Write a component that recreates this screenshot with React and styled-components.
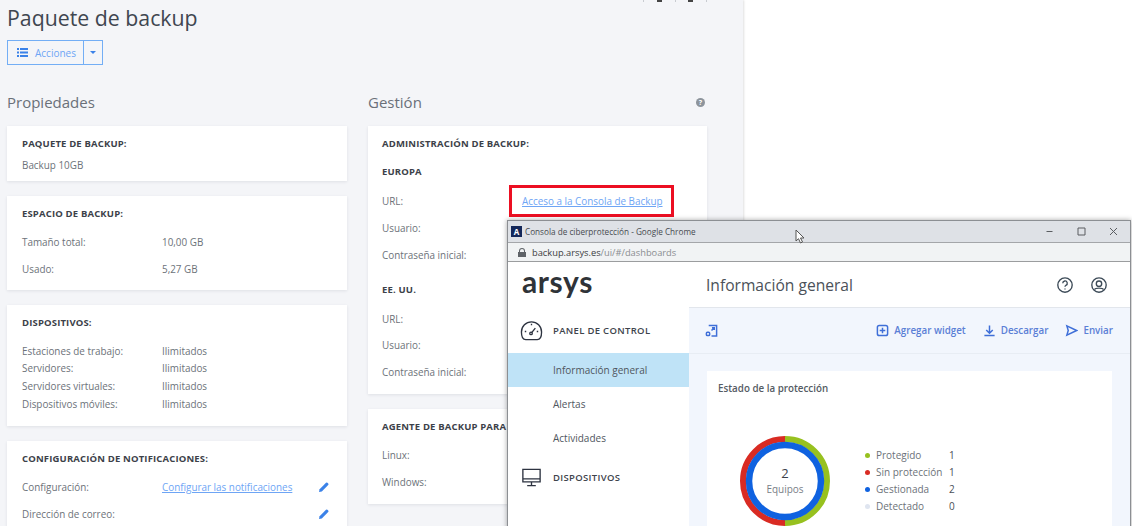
import React from 'react';
import styled, { createGlobalStyle } from 'styled-components';

const GlobalStyle = createGlobalStyle`
  html, body { margin: 0; padding: 0; background: #fff; }
  body { font-family: "Open Sans", "Liberation Sans", sans-serif; color: #4a4f57; }
`;

const Screen = styled.div`
  position: relative;
  width: 1132px;
  height: 526px;
  overflow: hidden;
  background: #fff;
`;

const Panel = styled.main`
  box-sizing: border-box;
  width: 743px;
  height: 526px;
  padding: 4px 36px 0 7px;
  overflow: hidden;
  background: #f4f5f8;
  box-shadow: 1px 0 2px rgba(0, 0, 0, 0.12);
`;

const TopMarks = styled.div`
  position: absolute;
  top: 0;
  left: 643px;
  display: flex;
  width: 64px;
  height: 2px;
  justify-content: space-between;
  span { width: 1px; background: #c9ccd1; }
  span:nth-child(2), span:nth-child(4) { width: 5px; background: #444; }
`;

const Title = styled.h1`
  margin: 0;
  font-size: 21.3px;
  line-height: 27px;
  font-weight: 400;
  color: #3f4650;
`;

const SplitButton = styled.div`
  display: inline-flex;
  height: 25px;
  margin-top: 9px;
  border: 1px solid #73aef5;
  box-sizing: border-box;
  color: #6ea5f5;
  font-size: 10px;
  align-items: stretch;
`;

const ButtonMain = styled.span`
  display: flex;
  width: 76px;
  box-sizing: border-box;
  padding-left: 9px;
  gap: 7px;
  align-items: center;
  border-right: 1px solid #73aef5;
`;

const ButtonCaret = styled.span`
  display: flex;
  flex: 1;
  width: 18px;
  align-items: center;
  justify-content: center;
  &::after {
    content: '';
    border-left: 3px solid transparent;
    border-right: 3px solid transparent;
    border-top: 3px solid #3b82e8;
  }
`;

const Columns = styled.div`
  display: grid;
  grid-template-columns: 340px 339px;
  gap: 21px;
  margin-top: 26px;
  align-items: start;
`;

const Column = styled.section`
  display: flex;
  flex-direction: column;
  gap: 15px;
`;

const SectionHead = styled.div`
  display: flex;
  height: 22px;
  margin-bottom: -2px;
  align-items: center;
  justify-content: space-between;
  font-size: 15px;
  color: #6a7079;
`;

const HelpDot = styled.span`
  display: flex;
  width: 9px;
  height: 9px;
  margin-right: 2px;
  border-radius: 50%;
  background: #8d949c;
  color: #fff;
  font-size: 7px;
  font-weight: 700;
  align-items: center;
  justify-content: center;
`;

const Card = styled.div`
  box-sizing: border-box;
  height: ${p => p.$height}px;
  padding: 10px 15px 0 ${p => p.$inset || 15}px;
  background: #fff;
  box-shadow: 0 1px 3px rgba(40, 50, 70, 0.1);
  font-size: 9.9px;
  overflow: hidden;
`;

const CardTitle = styled.div`
  height: ${p => p.$height || 16}px;
  margin-top: ${p => p.$gap || 0}px;
  line-height: 16px;
  font-size: 9.5px;
  font-weight: 700;
  letter-spacing: 0.16px;
  color: #3c4149;
`;

const Row = styled.div`
  display: grid;
  grid-template-columns: 140px 1fr auto;
  height: ${p => p.$height || 27}px;
  align-items: center;
  color: #6c7279;
`;

const Link = styled.a`
  position: relative;
  justify-self: start;
  color: #6ea5f5;
  text-decoration: underline;
  &[data-boxed]::after {
    content: '';
    position: absolute;
    top: -9px;
    bottom: -9px;
    left: -13px;
    right: -11px;
    border: 3px solid #ec0f22;
  }
`;

const Pencil = styled.svg`
  width: 10px;
  height: 10px;
  fill: #3b82e8;
  margin-right: 3px;
`;

/* chrome window sitting on top of the page */
const Popup = styled.div`
  position: absolute;
  left: 507px;
  top: 220px;
  width: 624px;
  height: 320px;
  display: flex;
  flex-direction: column;
  background: #fff;
  border: 1px solid #8c8f93;
  box-sizing: border-box;
  box-shadow: 0 0 5px rgba(0, 0, 0, 0.35);
`;

const TitleBar = styled.div`
  display: flex;
  flex: 0 0 21px;
  padding: 0 4px 0 3px;
  align-items: center;
  gap: 3px;
  background: #dee1e6;
  font-size: 8.2px;
  color: #474b50;
  border-bottom: 1px solid #a4a6a9;
`;

const Favicon = styled.span`
  display: flex;
  width: 11px;
  height: 11px;
  background: #14285a;
  color: #fff;
  font-size: 8px;
  font-weight: 700;
  align-items: center;
  justify-content: center;
`;

const WindowButtons = styled.div`
  display: flex;
  margin-left: auto;
  gap: 19px;
  padding-right: 6px;
  color: #5a5d61;
  svg { display: block; width: 13px; height: 13px; fill: none; stroke: currentColor; stroke-width: 1; }
`;

const AddressBar = styled.div`
  display: flex;
  flex: 0 0 18px;
  padding-left: 10px;
  gap: 6px;
  align-items: center;
  background: #f1f3f4;
  border-bottom: 1px solid #9b9d9f;
  font-size: 9.3px;
  color: #8a8d91;
  b { font-weight: 400; color: #3c4043; }
  svg { width: 8px; height: 9px; fill: #5f6368; }
`;

const PopupBody = styled.div`
  display: grid;
  flex: 1;
  grid-template-columns: 181px 1fr;
  min-height: 0;
`;

const Sidebar = styled.nav`
  display: flex;
  flex-direction: column;
`;

const Logo = styled.div`
  height: 46px;
  padding-left: 14px;
  font-family: "Lato", sans-serif;
  font-size: 30px;
  font-weight: 700;
  line-height: 38px;
  letter-spacing: 0.6px;
  color: #2f3338;
`;

const NavGroup = styled.div`
  display: flex;
  height: ${p => p.$height}px;
  padding-left: 12px;
  gap: 10px;
  align-items: center;
  font-size: 9.5px;
  font-weight: 600;
  letter-spacing: 0.32px;
  color: #3e444c;
  svg { width: 23px; height: 23px; fill: none; stroke: #2d3340; stroke-width: 1.4; flex: none; }
`;

const NavItem = styled.div`
  display: flex;
  height: ${p => p.$height || 34}px;
  padding-left: 45px;
  align-items: center;
  font-size: 10px;
  color: #4f565e;
  background: ${p => (p.$active ? '#bfe3f7' : 'transparent')};
`;

const Content = styled.div`
  display: flex;
  flex-direction: column;
  background: #f2f6fd;
`;

const PageHead = styled.header`
  display: flex;
  flex: 0 0 45px;
  padding: 0 22px 0 17px;
  gap: 16px;
  align-items: center;
  background: #fff;
  border-bottom: 1px solid #e2e6ec;
  font-size: 15.6px;
  color: #4b5159;
  span { margin-right: auto; }
  svg { width: 18px; height: 18px; fill: none; stroke: #3c4a57; stroke-width: 1.5; }
`;

const Toolbar = styled.div`
  display: flex;
  flex: 0 0 45px;
  padding: 0 17px 0 16px;
  gap: 17px;
  align-items: center;
  border-bottom: 1px solid #e8edf4;
  font-size: 9.8px;
  font-weight: 600;
  color: #5b7fd6;
`;

const ToolAction = styled.span`
  display: flex;
  gap: 5px;
  align-items: center;
  svg { width: 13px; height: 13px; fill: none; stroke: #3f6fd8; stroke-width: 1.6; }
  &:first-child { margin-right: auto; }
`;

const Widget = styled.div`
  flex: 1;
  margin: 17px 18px 0 18px;
  padding: 10px 11px;
  background: #fff;
`;

const WidgetTitle = styled.div`
  font-size: 9.8px;
  font-weight: 600;
  line-height: 16px;
  color: #555b63;
`;

const Chart = styled.div`
  display: flex;
  margin: 39px 0 0 22px;
  gap: 35px;
  align-items: flex-start;
`;

const Donut = styled.div`
  position: relative;
  width: 90px;
  height: 90px;
  svg { display: block; }
`;

const DonutLabel = styled.div`
  position: absolute;
  inset: 0;
  display: flex;
  flex-direction: column;
  padding-top: 28px;
  box-sizing: border-box;
  align-items: center;
  font-size: 10px;
  line-height: 15px;
  color: #7a8087;
  b { font-size: 13px; font-weight: 400; color: #3c4149; line-height: 18px; }
`;

const Legend = styled.ul`
  display: grid;
  grid-template-columns: 5px 67px auto;
  grid-auto-rows: 17px;
  column-gap: 6px;
  margin: 10.5px 0 0;
  padding: 0;
  list-style: none;
  align-items: center;
  font-size: 10px;
  color: #6c7279;
  li { display: contents; }
  strong { font-weight: 400; color: #4a4f57; }
`;

const Dot = styled.i`
  width: 5px;
  height: 5px;
  border-radius: 50%;
  background: ${p => p.$color};
`;

const Cursor = styled.svg`
  position: absolute;
  left: 795px;
  top: 229px;
  width: 11px;
  height: 15px;
  fill: #fff;
  stroke: #555;
  stroke-width: 1;
`;

const legend = [
  ['Protegido', 1, '#97c11f'],
  ['Sin protección', 1, '#d92b23'],
  ['Gestionada', 2, '#0f62e0'],
  ['Detectado', 0, '#dfe5f0'],
];

const PencilIcon = () => (
  <Pencil viewBox="0 0 10 10"><path d="M0 10l.6-2.800L7 .8a1 1 0 0 1 1.400 0l.8.8a1 1 0 0 1 0 1.400L2.800 9.400z" /></Pencil>
);

const App = () => (
  <Screen>
    <GlobalStyle />
    <Panel>
      <Title>Paquete de backup</Title>
      <SplitButton>
        <ButtonMain>
          <svg width="11" height="9" viewBox="0 0 11 9" fill="#3b82e8">
            <path d="M0 0h2v2H0zM3 0h8v2H3zM0 3.500h2v2H0zM3 3.500h8v2H3zM0 7h2v2H0zM3 7h8v2H3z" />
          </svg>
          Acciones
        </ButtonMain>
        <ButtonCaret />
      </SplitButton>
      <Columns>
        <Column>
          <SectionHead>Propiedades</SectionHead>
          <Card $height={55}>
            <CardTitle $height={20}>PAQUETE DE BACKUP:</CardTitle>
            <Row $height={17}>Backup 10GB</Row>
          </Card>
          <Card $height={94}>
            <CardTitle $height={22}>ESPACIO DE BACKUP:</CardTitle>
            <Row><span>Tamaño total:</span><span>10,00 GB</span></Row>
            <Row><span>Usado:</span><span>5,27 GB</span></Row>
          </Card>
          <Card $height={121}>
            <CardTitle $height={27}>DISPOSITIVOS:</CardTitle>
            <Row $height={17.6}><span>Estaciones de trabajo:</span><span>Ilimitados</span></Row>
            <Row $height={17.6}><span>Servidores:</span><span>Ilimitados</span></Row>
            <Row $height={17.6}><span>Servidores virtuales:</span><span>Ilimitados</span></Row>
            <Row $height={17.6}><span>Dispositivos móviles:</span><span>Ilimitados</span></Row>
          </Card>
          <Card $height={100}>
            <CardTitle $height={23}>CONFIGURACIÓN DE NOTIFICACIONES:</CardTitle>
            <Row $height={26.5}>
              <span>Configuración:</span>
              <Link>Configurar las notificaciones</Link>
              <PencilIcon />
            </Row>
            <Row $height={26.5}>
              <span>Dirección de correo:</span>
              <span />
              <PencilIcon />
            </Row>
          </Card>
        </Column>
        <Column>
          <SectionHead>Gestión<HelpDot>?</HelpDot></SectionHead>
          <Card $height={268} $inset={14}>
            <CardTitle $height={28}>ADMINISTRACIÓN DE BACKUP:</CardTitle>
            <CardTitle $height={23}>EUROPA</CardTitle>
            <Row><span>URL:</span><Link data-boxed>Acceso a la Consola de Backup</Link></Row>
            <Row>Usuario:</Row>
            <Row>Contraseña inicial:</Row>
            <CardTitle $gap={13.5} $height={23.5}>EE. UU.</CardTitle>
            <Row>URL:</Row>
            <Row $height={26.5}>Usuario:</Row>
            <Row $height={26.5}>Contraseña inicial:</Row>
          </Card>
          <Card $height={95} $inset={14}>
            <CardTitle $height={22}>AGENTE DE BACKUP PARA</CardTitle>
            <Row>Linux:</Row>
            <Row>Windows:</Row>
          </Card>
        </Column>
      </Columns>
    </Panel>
    <TopMarks><span /><span /><span /><span /><span /></TopMarks>

    <Popup>
      <TitleBar>
        <Favicon>A</Favicon>
        Consola de ciberprotección - Google Chrome
        <WindowButtons>
          <svg viewBox="0 0 13 13"><path d="M3.500 6.500h6" /></svg>
          <svg viewBox="0 0 13 13"><path d="M3 3h7v7H3z" /></svg>
          <svg viewBox="0 0 13 13"><path d="M3 3l7 7M10 3l-7 7" /></svg>
        </WindowButtons>
      </TitleBar>
      <AddressBar>
        <svg viewBox="0 0 8 9"><path d="M1 4V3a3 3 0 0 1 6 0v1h1v5H0V4zm1 0h4V3a2 2 0 0 0-4 0z" /></svg>
        <span><b>backup.arsys.es</b>/ui/#/dashboards</span>
      </AddressBar>
      <PopupBody>
        <Sidebar>
          <Logo>arsys</Logo>
          <NavGroup $height={45}>
            <svg viewBox="0 0 24 24">
              <path d="M6 21.500C3 21.500 1.500 18.500 1.500 13.500A10.500 10.500 0 0 1 22.500 13.500C22.500 18.500 21 21.500 18 21.500z" />
              <path d="M12 14.500l4-5M12 5v1.500M5 13h1.500M19 13h-1.500" />
              <circle cx="11.500" cy="15" r="1.300" />
            </svg>
            PANEL DE CONTROL
          </NavGroup>
          <NavItem $active>Información general</NavItem>
          <NavItem>Alertas</NavItem>
          <NavItem>Actividades</NavItem>
          <NavGroup $height={45}>
            <svg viewBox="0 0 24 24">
              <path d="M3 3.500h18v13H3zM3 13.500h18M12 16.500v3.500M7.500 20.500h9" />
            </svg>
            DISPOSITIVOS
          </NavGroup>
        </Sidebar>
        <Content>
          <PageHead>
            <span>Información general</span>
            <svg viewBox="0 0 20 20"><circle cx="10" cy="10" r="8" /><path d="M7.500 8a2.500 2.500 0 1 1 3.500 2.300c-.7.400-1 .8-1 1.700M10 14v1" /></svg>
            <svg viewBox="0 0 20 20"><circle cx="10" cy="10" r="8" /><circle cx="10" cy="8.500" r="3" /><path d="M5 15c1-2 9-2 10 0" /></svg>
          </PageHead>
          <Toolbar>
            <ToolAction>
              <svg viewBox="0 0 14 14"><path d="M4 1.500h8.500V13H7M7 7l3-3M7.500 4H10v2.500" /><rect x="1.500" y="9" width="3.500" height="3.500" rx="1" /></svg>
            </ToolAction>
            <ToolAction>
              <svg viewBox="0 0 14 14"><rect x="1.500" y="1.500" width="11" height="11" rx="2" /><path d="M7 4v6M4 7h6" /></svg>
              Agregar widget
            </ToolAction>
            <ToolAction>
              <svg viewBox="0 0 14 14"><path d="M7 1.500v8M3.500 6.500L7 10l3.500-3.500M1.500 12.500h11" /></svg>
              Descargar
            </ToolAction>
            <ToolAction>
              <svg viewBox="0 0 14 14"><path d="M2 2l10.500 5L2 12l1.500-5z" /></svg>
              Enviar
            </ToolAction>
          </Toolbar>
          <Widget>
            <WidgetTitle>Estado de la protección</WidgetTitle>
            <Chart>
              <Donut>
                <svg width="90" height="90" viewBox="0 0 90 90" fill="none">
                  <path d="M45 3a42 42 0 0 1 0 84" stroke="#97c11f" strokeWidth="6" />
                  <path d="M45 87a42 42 0 0 1 0-84" stroke="#d92b23" strokeWidth="6" />
                  <circle cx="45" cy="45" r="36" stroke="#0f62e0" strokeWidth="6.500" />
                </svg>
                <DonutLabel><b>2</b>Equipos</DonutLabel>
              </Donut>
              <Legend>
                {legend.map(([label, count, color]) => (
                  <li key={label}>
                    <Dot $color={color} />
                    <span>{label}</span>
                    <strong>{count}</strong>
                  </li>
                ))}
              </Legend>
            </Chart>
          </Widget>
        </Content>
      </PopupBody>
    </Popup>
    <Cursor viewBox="0 0 11 15"><path d="M1 1v11l2.500-2.300L5.500 14l2-1-2-4H9z" /></Cursor>
  </Screen>
);

export default App;
